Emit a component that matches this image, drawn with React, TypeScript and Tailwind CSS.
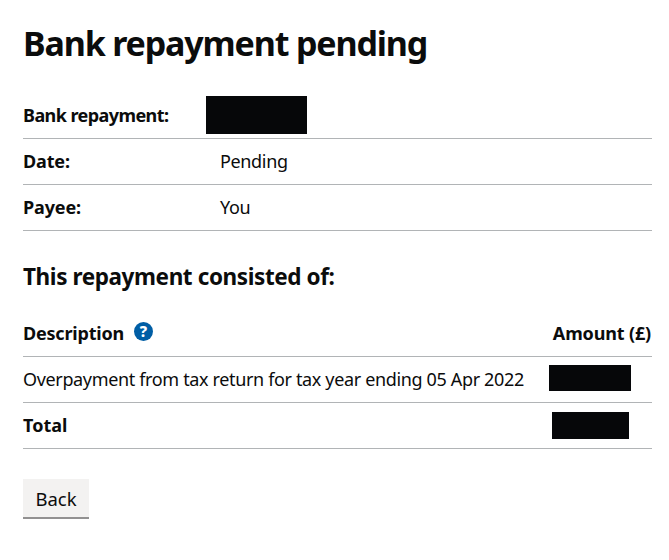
import React from 'react';

const Redacted = ({ className }: { className: string }) => <div className={`bg-[#060709] ${className}`} />;

const SummaryRow = ({ label, children }: { label: string; children: React.ReactNode }) => (
  <div className="flex h-[46px] items-center border-b border-[#b1b4b6]">
    <div className="w-[197px] font-bold tracking-[-0.15px]">{label}</div>
    <div>{children}</div>
  </div>
);

export default function App() {
  return (
    <div className="h-[560px] bg-white pl-[23px] pr-[17px] text-[18px] leading-[25px] tracking-[-0.35px] text-[#0b0c0c] [font-family:'Noto_Sans',sans-serif]">
      {/* Heading */}
      <h1 className="pt-[21px] text-[34px] leading-[45px] font-bold tracking-[-1.15px]">Bank repayment pending</h1>

      {/* Summary */}
      <div className="mt-[30px]">
        <div className="flex h-[43px] items-center border-b border-[#b1b4b6] pb-[4px]">
          <div className="w-[183px] font-bold tracking-[-0.57px]">Bank repayment:</div>
          <Redacted className="h-[38px] w-[101px]" />
        </div>
        <SummaryRow label="Date:">Pending</SummaryRow>
        <SummaryRow label="Payee:">You</SummaryRow>
      </div>

      <h2 className="mt-[31px] text-[22.5px] leading-[30px] font-bold tracking-[-0.4px]">This repayment consisted of:</h2>

      {/* Breakdown */}
      <div className="mt-[18px]">
        <div className="flex h-[47px] items-center justify-between border-b border-[#b1b4b6]">
          <div className="flex items-center font-bold tracking-[-0.2px]">
            Description
            <span className="mb-[4px] ml-[10px] flex h-[19px] w-[19px] items-center justify-center rounded-full bg-[#005ea5] text-[15px] leading-[19px] font-extrabold tracking-normal text-white">?</span>
          </div>
          <div className="mr-[1px] font-bold tracking-[-0.15px]">Amount (£)</div>
        </div>
        <div className="flex h-[46px] items-center border-b border-[#b1b4b6]">
          <div className="w-[526px]">Overpayment from tax return for tax year ending 05 Apr 2022</div>
          <Redacted className="mb-[4px] h-[26px] w-[82px]" />
        </div>
        <div className="flex h-[46px] items-center border-b border-[#b1b4b6]">
          <div className="w-[529px] font-bold tracking-normal">Total</div>
          <Redacted className="h-[27px] w-[77px]" />
        </div>
      </div>

      <button className="mt-[30px] h-[40px] w-[66px] border-b-2 border-[#929191] bg-[#f3f2f1] text-[18.5px] tracking-normal">Back</button>
    </div>
  );
}
